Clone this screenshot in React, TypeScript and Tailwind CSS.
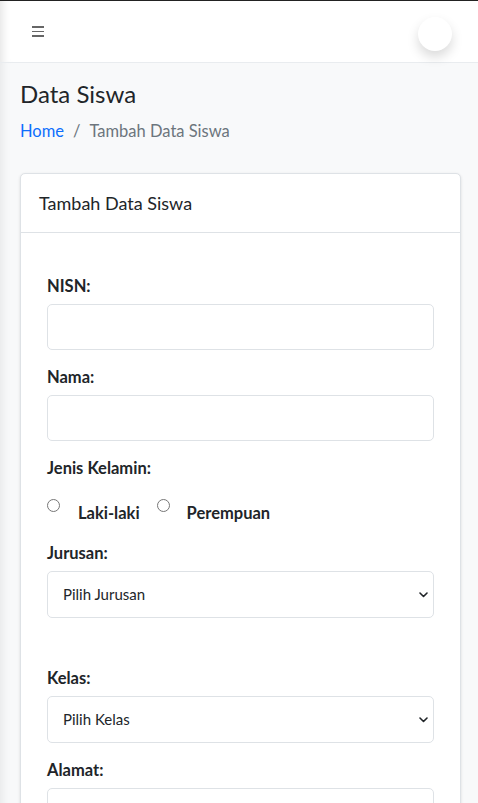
import React from "react";

const Chevron = () => (
  <svg width="9" height="7" viewBox="0 0 9 7" className="absolute right-[5px] top-1/2 -translate-y-1/2" fill="none">
    <path d="M1 1.5 4.5 5 8 1.5" stroke="#212529" strokeWidth="1.6" strokeLinecap="round" strokeLinejoin="round" />
  </svg>
);

function Label({ children }: { children: React.ReactNode }) {
  return <label className="block text-[16.5px] leading-[24px] font-bold text-[#212529] mb-[6px]">{children}</label>;
}

function Input() {
  return <div className="h-[46px] rounded-[5px] border border-[#dee2e6] bg-white" />;
}

function Select({ text }: { text: string }) {
  return (
    <div className="relative h-[47px] rounded-[5px] border border-[#dee2e6] bg-white flex items-center pl-[15px]">
      <span className="text-[15px] text-[#212529]">{text}</span>
      <Chevron />
    </div>
  );
}

export default function App() {
  return (
    <div className="min-h-[803px] bg-[#f8f9fa] border-t border-[#222]" style={{ fontFamily: "Lato, 'Noto Sans', sans-serif" }}>
      <header className="h-[62px] bg-white border-b border-[#e9ecef] flex items-center justify-between pl-[32px] pr-[26px] shadow-[inset_10px_0_10px_-8px_rgba(0,0,0,0.12)]">
        <div className="flex flex-col gap-[3px] w-[12px]">
          <span className="h-[1.5px] bg-[#666]" />
          <span className="h-[1.5px] bg-[#666]" />
          <span className="h-[1.5px] bg-[#666]" />
        </div>
        <div className="w-[34px] h-[34px] rounded-full bg-white shadow-[0_6px_12px_rgba(0,0,0,0.15)] mt-[4px]" />
      </header>
      <main className="pl-[20px] pr-[17px] pt-[16px] pb-[20px] shadow-[inset_10px_0_10px_-8px_rgba(0,0,0,0.08)]">
        <h1 className="text-[24px] leading-[30px] text-[#212529]">Data Siswa</h1>
        <nav className="mt-[10px] text-[16.5px] leading-[24px] flex gap-[9px]">
          <span className="text-[#0d6efd]">Home</span>
          <span className="text-[#6c757d]">/</span>
          <span className="text-[#6c757d]">Tambah Data Siswa</span>
        </nav>
        <div className="mt-[30px] bg-white border border-[#dee2e6] rounded-[5px] shadow-[0_1px_3px_rgba(0,0,0,0.12)]">
          <div className="h-[59px] border-b border-[#dee2e6] flex items-center px-[18px]">
            <span className="text-[18px] text-[#212529]">Tambah Data Siswa</span>
          </div>
          <div className="px-[26px] pt-[41px] pb-[20px]">
            <div className="mb-[15px]">
              <Label>NISN:</Label>
              <Input />
            </div>
            <div className="mb-[15px]">
              <Label>Nama:</Label>
              <Input />
            </div>
            <div className="mb-[16px]">
              <Label>Jenis Kelamin:</Label>
              <div className="flex items-start mt-[13px]">
                <span className="w-[13px] h-[13px] rounded-full border border-[#767676] mt-[6px] bg-white" />
                <span className="ml-[18px] text-[16.5px] font-bold text-[#212529] leading-[24px] mt-[8px]">Laki-laki</span>
                <span className="ml-[17px] w-[13px] h-[13px] rounded-full border border-[#767676] mt-[6px] bg-white" />
                <span className="ml-[17px] text-[16.5px] font-bold text-[#212529] leading-[24px] mt-[8px]">Perempuan</span>
              </div>
            </div>
            <div className="mb-[48px]">
              <Label>Jurusan:</Label>
              <Select text="Pilih Jurusan" />
            </div>
            <div className="mb-[15px]">
              <Label>Kelas:</Label>
              <Select text="Pilih Kelas" />
            </div>
            <div className="mb-[15px]">
              <Label>Alamat:</Label>
              <Input />
            </div>
          </div>
        </div>
      </main>
    </div>
  );
}
